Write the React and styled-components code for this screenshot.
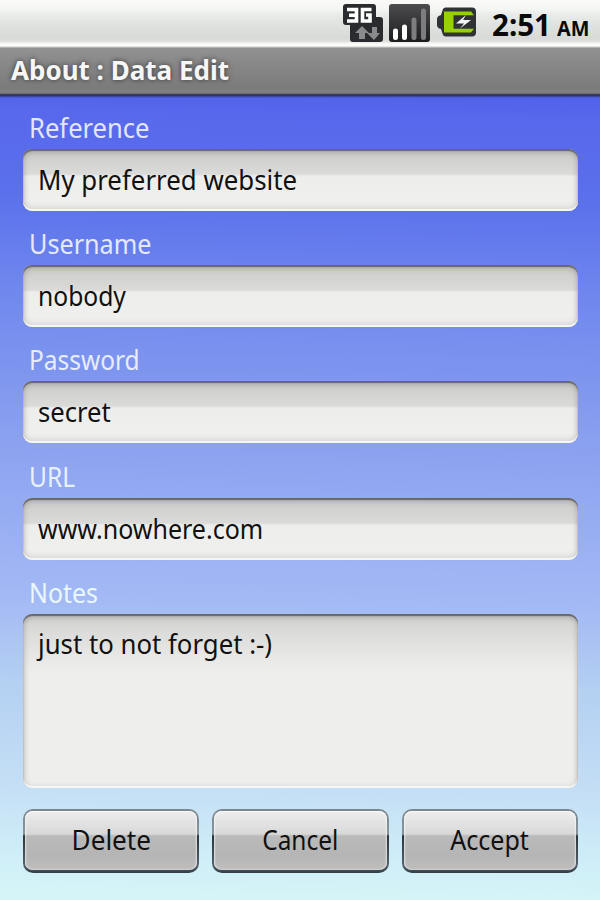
import React from "react";
import styled, { createGlobalStyle } from "styled-components";

const Global = createGlobalStyle`
  * { box-sizing: border-box; }
  html, body { margin: 0; padding: 0; }
  body { font-family: "Noto Sans", "Open Sans", sans-serif; }
`;

const Screen = styled.div`
  width: 600px;
  height: 900px;
  overflow: hidden;
  display: flex;
  flex-direction: column;
  background: linear-gradient(181deg, #5060ea 10.5%, #5868ec 13%, #5a70ec 22%, #7088ee 33%, #8ca2f0 50%, #a4baf5 67%, #b4d0f2 76%, #c4def5 87%, #cfeef8 95%, #d4f4f7 99%);
`;

const StatusBar = styled.header`
  height: 48px;
  flex: none;
  display: flex;
  align-items: flex-start;
  padding: 3px 0 0 342px;
  background: linear-gradient(#fafbf9 0, #f4f6f3 9px, #e9ebe8 15px, #e0e3e0 24px, #d8dad8 38px, #dcdedb 41px, #fbfcfa 44px, #fbfcfa 46px, #9a9a9a 48px);
`;

const Clock = styled.div`
  display: flex;
  align-items: baseline;
  margin: -1px 0 0 14px;
  color: #0a0a0a;
  font-weight: 700;
  font-size: 30px;
  line-height: 46px;
  white-space: nowrap;
`;

const Squeeze = styled.span`
  display: inline-block;
  white-space: pre;
  transform: scaleX(${(p) => p.$x});
  transform-origin: ${(p) => p.$origin || "left"} center;
`;

const Meridiem = styled.span`
  display: inline-block;
  font-size: 21.5px;
  margin-left: 5px;
  transform: scaleX(0.92);
  transform-origin: left center;
`;

const TitleBar = styled.h1`
  margin: 0;
  height: 50px;
  flex: none;
  padding: 0 11px;
  background: linear-gradient(#929292 0, #8a8a8a 12px, #7b7b7b 40px, #808080 45px, #27284a 47px, #3c48a8 48.5px, #5060e0 50px);
  color: #f6f6f6;
  font-size: 26px;
  line-height: 44px;
  font-weight: 700;
  text-shadow: 0 0 5px #333;
`;

const Form = styled.form`
  display: flex;
  flex-direction: column;
  padding: 15px 22px 0 23px;
`;

const Field = styled.label`
  display: flex;
  flex-direction: column;
  height: ${(p) => p.$height || 116.2}px;
  color: ${(p) => p.$color};
  font-size: 26.5px;
  line-height: 30px;
`;

const Caption = styled.span`
  padding-left: 6px;
  height: 36px;
`;

const Box = styled.span`
  height: ${(p) => (p.$tall ? 174 : 62)}px;
  padding: ${(p) => (p.$tall ? 15 : 16)}px 15px;
  border-radius: 9px;
  color: #111;
  background: ${(p) =>
    p.$tall
      ? "linear-gradient(#d0d1cf 0, #dcdddb 20px, #e8e9e7 44px, #eeefed 60px)"
      : "linear-gradient(#cbccca 0, #d9dad7 23px, #dadbd8 25px, #edeeec 27px, #eff0ee 52px, #e4e5e3 100%)"};
  box-shadow: inset 0 2px 1px #555c, inset 0 4px 5px #9998, inset 0 -2px 0 #f8f8f6, inset 0 0 6px #8886;
`;

const Actions = styled.div`
  display: flex;
  gap: 13px;
  margin-top: 21px;
`;

const Button = styled.button`
  flex: 1;
  height: 64px;
  padding: 0;
  border: 2px solid transparent;
  border-bottom-width: 3px;
  border-radius: 10px;
  background:
    linear-gradient(#eeeeee 0, #d8d8d8 23px, #bababa 25px, #b5b5b5 44px, #bfbfbf 60px) padding-box,
    linear-gradient(#7c868e 0, #8a949b 25px, #2e3538 27px, #53606a 56px, #333e44 64px) border-box;
  box-shadow: inset 0 1px 1px #fff8, inset 1px 0 2px #fff8, inset -1px 0 2px #fff8;
  font: 26.5px/57px "Noto Sans", "Open Sans", sans-serif;
  color: #111;
`;

const Icon = styled.svg`
  display: block;
  flex: none;
  margin-right: ${(p) => p.$gap || 0}px;
`;

const fields = [
  { label: "Reference", labelX: 0.965, value: "My preferred website", x: 0.975, color: "#e2e6ff" },
  { label: "Username", labelX: 0.95, value: "nobody", x: 0.93, color: "#e4e9ff" },
  { label: "Password", labelX: 0.923, value: "secret", x: 0.967, color: "#e6edff" },
  { label: "URL", labelX: 0.925, value: "www.nowhere.com", x: 0.944, color: "#e8f2ff" },
  { label: "Notes", labelX: 0.94, value: "just to not forget :-)", x: 0.972, color: "#eaf7ff", tall: true },
];

const actions = [
  { name: "Delete", x: 0.985 },
  { name: "Cancel", x: 0.922 },
  { name: "Accept", x: 0.945 },
];

const NetworkIcon = () => (
  <Icon width="42" height="42" viewBox="0 0 42 42" $gap={4}>
    <path d="M4 1h27q3 0 3 3v10h4q3 0 3 3v19q0 3-3 3H11q-3 0-3-3V22H4q-3 0-3-3V4q0-3 3-3z" fill="#292b2e" />
    <path d="M5 6.500h9.500v11.500H5M7 12.200h7M29.500 6.500h-9V18h7.500v-6h-4" fill="none" stroke="#fff" strokeWidth="3.600" />
    <path d="M21 23l7 7h-4v6h-6v-6h-4zM31 24h5v6h3l-6 7-7-7h5z" transform="translate(-1 0)" fill="#898b8d" />
  </Icon>
);

const SignalIcon = () => (
  <Icon width="42" height="42" viewBox="0 0 42 42" $gap={7}>
    <defs>
      <linearGradient id="panel" x2="0" y2="1">
        <stop stopColor="#4c4c4e" />
        <stop offset="1" stopColor="#1b1c1e" />
      </linearGradient>
    </defs>
    <rect x="1" y="1" width="41" height="38" rx="3" fill="url(#panel)" />
    <g strokeWidth="5" strokeLinecap="round">
      <path d="M7.500 28v6.500M16.500 24v10.500" stroke="#fff" />
      <path d="M26 17v17.500M35.500 8v26.500" stroke="#7d7d7f" />
    </g>
  </Icon>
);

const BatteryIcon = () => (
  <Icon width="41" height="42" viewBox="0 0 41 42">
    <path d="M9 4.500h26q4 0 4 4v21q0 4-4 4H9q-3 0-3.500-3L4 26q-4-1-4-4v-6q0-3 4-4l1.500-4.500q.5-3 3.500-3z" fill="#303335" />
    <path d="M7 8.500h27l3 3.700H16.500v13.600H37l-3 3.700H7z" fill="#97d100" />
    <path d="M29 12l-10 8.500h8l-4 5L34 17h-8z" fill="#f4f4f4" />
  </Icon>
);

export default function App() {
  return (
    <>
      <Global />
      <Screen>
        <StatusBar>
          <NetworkIcon />
          <SignalIcon />
          <BatteryIcon />
          <Clock>
            <Squeeze $x={0.985}>2:51</Squeeze>
            <Meridiem>AM</Meridiem>
          </Clock>
        </StatusBar>
        <TitleBar>
          <Squeeze $x={1}>About : Data Edit</Squeeze>
        </TitleBar>
        <Form>
          {fields.map((f) => (
            <Field key={f.label} $color={f.color} $height={f.tall && 210}>
              <Caption>
                <Squeeze $x={f.labelX}>{f.label}</Squeeze>
              </Caption>
              <Box $tall={f.tall}>
                <Squeeze $x={f.x}>{f.value}</Squeeze>
              </Box>
            </Field>
          ))}
          <Actions>
            {actions.map((a) => (
              <Button key={a.name} type="button">
                <Squeeze $x={a.x} $origin="center">{a.name}</Squeeze>
              </Button>
            ))}
          </Actions>
        </Form>
      </Screen>
    </>
  );
}
